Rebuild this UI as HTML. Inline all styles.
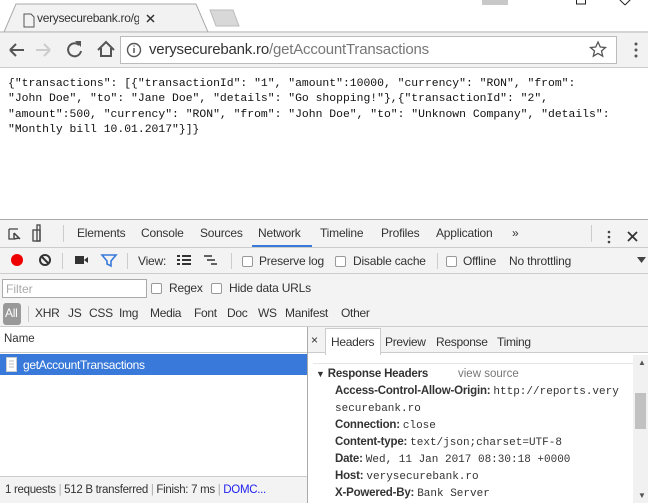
<!DOCTYPE html>
<html><head><style>
*{margin:0;padding:0;box-sizing:border-box}
body{width:648px;height:503px;overflow:hidden;background:#fff;font-family:"Liberation Sans",sans-serif;font-size:12px;color:#222;position:relative}
.a{position:absolute;white-space:nowrap}
.mono{font-family:"Liberation Mono",monospace}
.cb{position:absolute;width:11px;height:11px;border:1px solid #999;border-radius:2px;background:#fff}
.sep{position:absolute;width:1px;background:#ccc}
.t{position:absolute;top:226px;color:#333;font-size:12px;letter-spacing:-0.2px}
.v{position:absolute;top:254px;color:#333;font-size:12px;letter-spacing:-0.2px}
.f{position:absolute;top:306px;color:#333;font-size:12px;letter-spacing:-0.3px}
.h{position:absolute;left:335px;font-size:11.5px;color:#333;white-space:nowrap;letter-spacing:-0.2px}
.h .mono{font-size:11px;letter-spacing:0}
</style></head><body>
<div class="a" style="left:0;top:0;width:648px;height:32px;background:#fff"></div>
<svg class="a" style="left:0;top:0" width="648" height="33">
<path d="M4 32 L16 4 L196 4 L208 32 Z" fill="#f2f2f2" stroke="#aaa"/>
<path d="M210 10 L233 10 L239 26 L216 26 Z" fill="#d8d8d8" stroke="#bbb"/>
<rect x="482" y="0" width="26" height="5" fill="#c8c8c8"/>
<rect x="576.5" y="-3" width="9" height="7" fill="none" stroke="#222"/>
<path d="M619 -1 L625 5 M631 -1 L625 5" stroke="#222"/>
<path d="M24 14 h7 l3 3 v10 h-10z" fill="none" stroke="#555"/>
<path d="M147 15 l7 7 M154 15 l-7 7" stroke="#333" stroke-width="1.5"/>
<line x1="0" y1="32" x2="4" y2="32" stroke="#aaa"/><line x1="208" y1="32" x2="648" y2="32" stroke="#aaa"/>
</svg>
<div class="a" style="left:37px;top:11px;font-size:12px;color:#333;width:102px;overflow:hidden;letter-spacing:-0.3px">verysecurebank.ro/getAc</div>
<div class="a" style="left:0;top:33px;width:648px;height:35px;background:#f2f2f2;border-bottom:1px solid #ccc"></div>
<svg class="a" style="left:0;top:33px" width="648" height="35">
<path d="M10 17 h14 M10 17 l6-6 M10 17 l6 6" stroke="#555" stroke-width="2" fill="none"/>
<path d="M36 17 h14 M50 17 l-6-6 M50 17 l-6 6" stroke="#ccc" stroke-width="2" fill="none"/>
<path d="M79 12 A6.5 6.5 0 1 0 81 18" stroke="#555" stroke-width="2" fill="none"/><path d="M75 8 l6 0 0 6z" fill="#555"/>
<path d="M98 17 l8-8 8 8 M101 15 v8 h10 v-8" stroke="#555" stroke-width="2" fill="none"/>
<rect x="120.5" y="3.5" width="496" height="27" fill="#fff" stroke="#bbb"/>
<circle cx="134" cy="17" r="6.5" fill="none" stroke="#555" stroke-width="1.4"/><path d="M134 15 v5 M134 12.5 v1" stroke="#555" stroke-width="1.5"/>
<path d="M598 9 l2.3 5 5.2 .5 -4 3.5 1.2 5.2 -4.7-2.8 -4.7 2.8 1.2-5.2 -4-3.5 5.2-.5z" fill="none" stroke="#555" stroke-width="1.3"/>
<circle cx="636" cy="11" r="1.5" fill="#555"/><circle cx="636" cy="17" r="1.5" fill="#555"/><circle cx="636" cy="23" r="1.5" fill="#555"/>
</svg>
<div class="a" style="left:149px;top:41px;font-size:15px;color:#333;letter-spacing:-0.2px">verysecurebank.ro<span style="color:#777">/getAccountTransactions</span></div>
<div class="a mono" style="left:8px;top:77px;font-size:11.4px;line-height:15.3px;color:#111;white-space:pre">{"transactions": [{"transactionId": "1", "amount":10000, "currency": "RON", "from":
"John Doe", "to": "Jane Doe", "details": "Go shopping!"},{"transactionId": "2",
"amount":500, "currency": "RON", "from": "John Doe", "to": "Unknown Company", "details":
"Monthly bill 10.01.2017"}]}</div>
<div class="a" style="left:0;top:219px;width:648px;height:108px;background:#f3f3f3;border-top:1px solid #aaa"></div>
<div class="a" style="left:0;top:247px;width:648px;height:1px;background:#ccc"></div>
<div class="a" style="left:0;top:273px;width:648px;height:1px;background:#ccc"></div>
<div class="a" style="left:0;top:326px;width:648px;height:1px;background:#ccc"></div>
<div class="a" style="left:252px;top:245px;width:60px;height:2px;background:#3879d9"></div>
<svg class="a" style="left:0;top:220px" width="648" height="108">
<path d="M9 9 h9 M9 9 v10 h4" stroke="#444" fill="none" stroke-width="1.3"/><path d="M14 13 l6 6 M14 13 v6 l5 -1" stroke="#444" fill="none" stroke-width="1.5"/>
<rect x="33" y="10" width="7" height="11" fill="none" stroke="#444" stroke-width="1.3"/><rect x="37" y="5" width="3" height="16" fill="none" stroke="#444" stroke-width="1.3"/>
<circle cx="17" cy="40" r="6" fill="#e00"/>
<circle cx="45" cy="40" r="5" fill="none" stroke="#333" stroke-width="2"/><path d="M41.5 36.5 l7 7" stroke="#333" stroke-width="2"/>
<rect x="75" y="36" width="9" height="8" fill="#333"/><path d="M84 40 l4-3 v6z" fill="#333"/>
<path d="M102 35 h14 l-5 6 v5 l-4 -2 v-3z" fill="none" stroke="#3879d9" stroke-width="1.6"/>
<path d="M177 36 h3 M182 36 h9 M177 40 h3 M182 40 h9 M177 44 h3 M182 44 h9" stroke="#333" stroke-width="2"/>
<path d="M204 36 h8 M207 40 h8 M211 44 h6" stroke="#333" stroke-width="1.5"/>
<path d="M637 37 h9 l-4.5 6z" fill="#444"/>
<circle cx="609" cy="12" r="1.3" fill="#444"/><circle cx="609" cy="17" r="1.3" fill="#444"/><circle cx="609" cy="22" r="1.3" fill="#444"/>
<path d="M628 12 l9 9 M637 12 l-9 9" stroke="#333" stroke-width="1.8"/>
<rect x="3" y="83" width="18" height="22" rx="3" fill="#999"/>
</svg>
<div class="sep" style="left:63px;top:225px;height:17px"></div>
<div class="sep" style="left:591px;top:225px;height:17px"></div>
<div class="sep" style="left:62px;top:253px;height:16px"></div>
<div class="sep" style="left:127px;top:253px;height:16px"></div>
<div class="sep" style="left:231px;top:253px;height:16px"></div>
<div class="sep" style="left:437px;top:253px;height:16px"></div>
<div class="sep" style="left:28px;top:306px;height:16px"></div>
<div class="t" style="left:77px">Elements</div><div class="t" style="left:141px">Console</div><div class="t" style="left:200px">Sources</div><div class="t" style="left:258px">Network</div><div class="t" style="left:320px">Timeline</div><div class="t" style="left:381px">Profiles</div><div class="t" style="left:436px">Application</div><div class="t" style="left:512px">»</div>
<div class="v" style="left:138px">View:</div>
<span class="cb" style="left:242px;top:256px"></span><div class="v" style="left:259px">Preserve log</div>
<span class="cb" style="left:335px;top:256px"></span><div class="v" style="left:353px">Disable cache</div>
<span class="cb" style="left:446px;top:256px"></span><div class="v" style="left:463px">Offline</div><div class="v" style="left:509px">No throttling</div>
<div class="a" style="left:2px;top:279px;width:145px;height:19px;background:#fff;border:1px solid #aaa;color:#aaa;padding:2px 3px;font-size:12px">Filter</div>
<span class="cb" style="left:151px;top:283px"></span><div class="v" style="left:169px;top:281px">Regex</div>
<span class="cb" style="left:211px;top:283px"></span><div class="v" style="left:229px;top:281px">Hide data URLs</div>
<div class="f" style="left:5px;color:#fff">All</div>
<div class="f" style="left:35px">XHR</div><div class="f" style="left:68px">JS</div><div class="f" style="left:89px">CSS</div><div class="f" style="left:119px">Img</div><div class="f" style="left:150px">Media</div><div class="f" style="left:194px">Font</div><div class="f" style="left:227px">Doc</div><div class="f" style="left:258px">WS</div><div class="f" style="left:285px">Manifest</div><div class="f" style="left:341px">Other</div>
<div class="a" style="left:0;top:327px;width:307px;height:26px;background:#fff;border-bottom:1px solid #ccc;padding:6px 4px;font-size:11.5px;color:#333">Name</div>
<div class="a" style="left:0;top:354px;width:307px;height:21px;background:#3879d9;color:#fff;padding:4px 0 0 23px;font-size:12px;letter-spacing:-0.3px">getAccountTransactions</div>
<svg class="a" style="left:6px;top:357px" width="12" height="16"><rect x=".5" y=".5" width="10" height="14" fill="#fff" stroke="#ccc"/><path d="M3 4h5M3 7h5M3 10h5" stroke="#bbb"/></svg>
<div class="a" style="left:0;top:476px;width:307px;height:27px;background:#f3f3f3;border-top:1px solid #ccc;padding:7px 5px;font-size:11.5px;color:#333;letter-spacing:-0.3px">1 requests <span style="color:#aaa">|</span> 512 B transferred <span style="color:#aaa">|</span> Finish: 7 ms <span style="color:#aaa">|</span> <span style="color:#22e">DOMC...</span></div>
<div class="a" style="left:307px;top:327px;width:1px;height:176px;background:#aaa"></div>
<div class="a" style="left:308px;top:327px;width:340px;height:26px;background:#f3f3f3;border-bottom:1px solid #ccc"></div>
<div class="a" style="left:311px;top:333px;font-size:12px;color:#333">×</div>
<div class="a" style="left:325px;top:328px;width:56px;height:27px;background:#fff;border:1px solid #ccc;border-bottom:none"></div>
<div class="a" style="left:331px;top:335px;font-size:12px;color:#333;letter-spacing:-0.3px">Headers</div>
<div class="a" style="left:385px;top:335px;font-size:12px;color:#333;letter-spacing:-0.3px">Preview</div>
<div class="a" style="left:436px;top:335px;font-size:12px;color:#333;letter-spacing:-0.3px">Response</div>
<div class="a" style="left:497px;top:335px;font-size:12px;color:#333;letter-spacing:-0.3px">Timing</div>
<div class="a" style="left:313px;top:363px;width:320px;height:1px;background:#e5e5e5"></div>
<div class="a" style="left:633px;top:355px;width:15px;height:148px;background:#f1f1f1"></div>
<div class="a" style="left:635px;top:393px;width:11px;height:36px;background:#c1c1c1"></div>
<div class="a" style="left:638px;top:358px;font-size:8px;color:#555">▲</div>
<div class="a" style="left:638px;top:491px;font-size:8px;color:#555">▼</div>
<div class="a" style="left:316px;top:368px;font-size:11.5px;color:#333;font-weight:bold;letter-spacing:-0.2px"><span style="font-size:9px">▼</span> Response Headers</div>
<div class="a" style="left:458px;top:368px;font-size:11.5px;color:#777">view source</div>
<div class="h" style="top:385px"><b>Access-Control-Allow-Origin:</b> <span class="mono">http://reports.very</span></div>
<div class="h" style="top:402px"><span class="mono">securebank.ro</span></div>
<div class="h" style="top:419px"><b>Connection:</b> <span class="mono">close</span></div>
<div class="h" style="top:436px"><b>Content-type:</b> <span class="mono">text/json;charset=UTF-8</span></div>
<div class="h" style="top:453px"><b>Date:</b> <span class="mono">Wed, 11 Jan 2017 08:30:18 +0000</span></div>
<div class="h" style="top:470px"><b>Host:</b> <span class="mono">verysecurebank.ro</span></div>
<div class="h" style="top:487px"><b>X-Powered-By:</b> <span class="mono">Bank Server</span></div>
</body></html>
